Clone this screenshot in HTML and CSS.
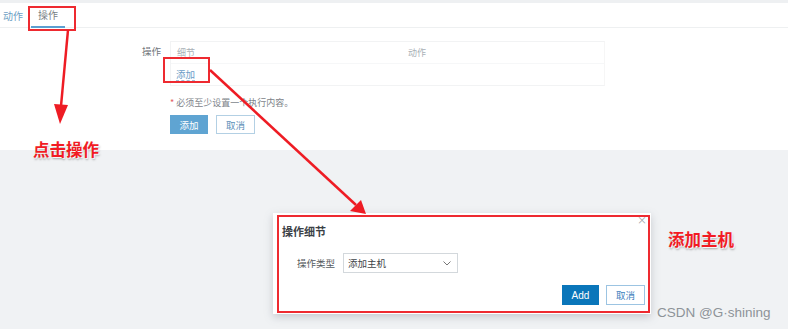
FILE: index.html
```html
<!DOCTYPE html>
<html>
<head>
<meta charset="utf-8">
<link rel="stylesheet" href="styles.css">
</head>
<body>
<div class="page">
  <div class="topband"></div>
  <div class="panel">
    <div class="tabs">
      <span class="tab tab-link">动作</span>
      <span class="tab tab-active">操作</span>
    </div>
    <div class="form">
      <div class="row">
        <div class="label">操作</div>
        <div class="table">
          <div class="thead">
            <span class="col-detail">细节</span>
            <span class="col-action">动作</span>
          </div>
          <div class="tbody">
            <span class="add-link">添加</span>
          </div>
        </div>
      </div>
      <div class="note"><span class="req">*</span> 必须至少设置一个执行内容。</div>
      <div class="buttons">
        <span class="btn btn-primary">添加</span>
        <span class="btn btn-outline">取消</span>
      </div>
    </div>
  </div>
  <div class="canvas"></div>

  <div class="modal">
    <div class="modal-title">操作细节</div>
    <span class="modal-close">×</span>
    <div class="modal-row">
      <span class="modal-label">操作类型</span>
      <span class="select">添加主机
        <svg class="chev" width="8" height="5" viewBox="0 0 8 5"><path d="M0.5 0.5 L4 4 L7.5 0.5" fill="none" stroke="#777" stroke-width="1"/></svg>
      </span>
    </div>
    <div class="modal-foot">
      <span class="mbtn mbtn-add">Add</span>
      <span class="mbtn mbtn-cancel">取消</span>
    </div>
  </div>

  <div class="ann-box box-tab"></div>
  <div class="ann-box box-add"></div>
  <div class="ann-box box-modal"></div>
  <div class="ann-text ann-click">点击操作</div>
  <div class="ann-text ann-host">添加主机</div>
  <div class="watermark">CSDN @G·shining</div>

  <svg class="arrows" width="788" height="329" viewBox="0 0 788 329">
    <line x1="68" y1="30" x2="61" y2="106" stroke="#ee1c24" stroke-width="2.5"/>
    <polygon points="54,104 68,105 60,124" fill="#ee1c24"/>
    <line x1="210" y1="70" x2="356" y2="205" stroke="#ee1c24" stroke-width="2.5"/>
    <polygon points="350,211 361,200 366,214" fill="#ee1c24"/>
  </svg>
</div>
</body>
</html>
```

FILE: styles.css
```css
* { box-sizing: border-box; }
html, body { margin: 0; padding: 0; }
body {
  width: 788px;
  height: 329px;
  overflow: hidden;
  background: #f0f2f4;
  font-family: "Noto Sans CJK SC", "Noto Sans", "Liberation Sans", sans-serif;
}
.page {
  position: relative;
  width: 788px;
  height: 329px;
  display: flex;
  flex-direction: column;
}
.topband { height: 3px; background: #eef0f2; }
.panel {
  height: 147px;
  background: #ffffff;
  display: flex;
  flex-direction: column;
}
.tabs {
  height: 25px;
  border-bottom: 1px solid #eef0f1;
  display: flex;
  align-items: stretch;
  font-size: 10px;
}
.tab {
  display: flex;
  align-items: center;
}
.tab-link { color: #6e9fc4; padding-left: 3px; width: 31px; }
.tab-active {
  color: #7a7f84;
  padding: 0 7px;
  border-bottom: 2px solid #5b9fd1;
  margin-bottom: -1px;
}
.form {
  display: flex;
  flex-direction: column;
  padding-top: 13px;
}
.row { display: flex; }
.label {
  width: 161px;
  text-align: right;
  padding-top: 3px;
  font-size: 9.5px;
  color: #6f757b;
}
.table {
  margin-left: 9px;
  width: 435px;
  height: 45px;
  border: 1px solid #f2f3f4;
  border-right-color: #f6f6f6;
  display: flex;
  flex-direction: column;
}
.thead {
  height: 22px;
  display: flex;
  align-items: center;
  font-size: 9px;
  color: #a9b0b6;
  border-bottom: 1px solid #f6f7f8;
}
.col-detail { padding-left: 6px; width: 237px; }
.tbody {
  flex: 1;
  display: flex;
  align-items: center;
  padding-left: 5px;
}
.add-link {
  font-size: 9.5px;
  color: #6a9cc6;
  border-bottom: 1px dashed #9fc0da;
  line-height: 11px;
}
.note {
  margin-left: 170px;
  margin-top: 10px;
  font-size: 9px;
  color: #7d8389;
}
.req { color: #e36060; }
.buttons {
  margin-left: 170px;
  margin-top: 6px;
  display: flex;
  gap: 8px;
}
.btn {
  height: 19px;
  display: flex;
  align-items: center;
  justify-content: center;
  font-size: 9.5px;
}
.btn-primary { width: 38px; background: #5fa4d2; color: #ffffff; }
.btn-outline { width: 39px; border: 1px solid #b3d0e4; color: #5b8fb9; }
.canvas {
  flex: 1;
  margin-left: 2px;
  background: #f0f2f4;
}

/* modal */
.modal {
  position: absolute;
  left: 273px;
  top: 213px;
  width: 378px;
  height: 101px;
  background: #ffffff;
  box-shadow: 0 3px 8px rgba(120,130,140,0.35);
  display: flex;
  flex-direction: column;
  padding: 10px 6px 0 9px;
}
.modal-title {
  font-size: 11px;
  font-weight: bold;
  color: #3c4247;
  height: 16px;
  line-height: 16px;
}
.modal-close {
  position: absolute;
  right: 4px;
  top: 2px;
  font-size: 10px;
  color: #9aa2a8;
  line-height: 10px;
}
.modal-row {
  display: flex;
  align-items: center;
  margin-top: 14px;
  padding-left: 15px;
}
.modal-label {
  font-size: 9.5px;
  color: #555b60;
  width: 46px;
}
.select {
  position: relative;
  width: 115px;
  height: 20px;
  border: 1px solid #d3d8dc;
  display: flex;
  align-items: center;
  padding-left: 4px;
  font-size: 9.5px;
  color: #3e4448;
}
.chev { position: absolute; right: 6px; top: 7px; }
.modal-foot {
  display: flex;
  justify-content: flex-end;
  gap: 7px;
  margin-top: 12px;
}
.mbtn {
  height: 20px;
  display: flex;
  align-items: center;
  justify-content: center;
  font-size: 9.5px;
}
.mbtn-add {
  width: 37px;
  background: #0a76ba;
  color: #ffffff;
  font-family: "Liberation Sans", "Noto Sans", sans-serif;
  font-size: 10px;
}
.mbtn-cancel {
  width: 39px;
  border: 1px solid #9cc4e2;
  color: #3c80bd;
}

/* annotations */
.ann-box {
  position: absolute;
  border: 2px solid #ee2a30;
}
.box-tab { left: 28px; top: 6px; width: 48px; height: 25px; }
.box-add { left: 163px; top: 57px; width: 47px; height: 26px; }
.box-modal { left: 277px; top: 215px; width: 373px; height: 98px; }
.ann-text {
  position: absolute;
  color: #f21b23;
  font-weight: bold;
  font-size: 16.5px;
  line-height: 18px;
  text-shadow: 1px 1px 1px #ffffff, 1px 2px 2px rgba(90,90,90,0.5);
}
.ann-click { left: 33px; top: 140px; }
.ann-host { left: 668px; top: 230px; }
.watermark {
  position: absolute;
  left: 657px;
  top: 305px;
  font-family: "Liberation Sans", "Noto Sans", sans-serif;
  font-size: 13.5px;
  color: #8d9398;
}
.arrows { position: absolute; left: 0; top: 0; pointer-events: none; }
```
